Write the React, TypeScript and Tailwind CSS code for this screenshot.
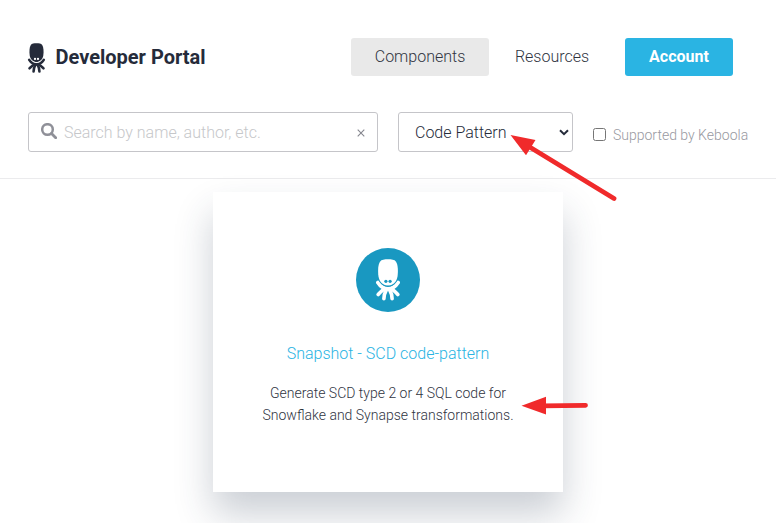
import React from 'react';

function Octopus({ className, ground }: { className: string; ground: string }) {
  return (
    <svg viewBox="0 0 24 42" className={className} fill="none" stroke="currentColor" strokeLinecap="round">
      <g strokeWidth="3.600">
        <path d="M1.800 23.500C4 27 7 29.800 12 29.800S20 27 22.200 23.500" />
        <path d="M9.500 30C6.500 30.500 4.500 33 2.200 35.500M14.500 30c3 .5 5 3 7.300 5.500" />
        <path d="M10.300 31C8.800 33.500 8 36 7.900 39.800M13.700 31c1.500 2.500 2.300 5 2.400 8.800" />
      </g>
      <path
        d="M12 .3C15.500 .3 18.500.5 20 2.700 22 5.800 22.300 12 21.500 17.500 20.600 23.500 16.500 26.600 12 26.600S3.400 23.500 2.500 17.500C1.700 12 2 5.800 4 2.700 5.500.5 8.500.3 12 .3Z"
        fill="currentColor"
        stroke="none"
      />
      <path d="M3.500 22.500C5.500 25.500 8.500 27.400 12 27.400s6.500-1.900 8.500-4.900" stroke={ground} strokeWidth=".7" />
      <circle cx="9.900" cy="22.300" r="1.600" fill={ground} stroke="none" />
      <circle cx="14.100" cy="22.300" r="1.600" fill={ground} stroke="none" />
    </svg>
  );
}

function Header() {
  return (
    <header className="flex h-[38px] items-center">
      <Octopus className="-ml-px mt-[2px] h-[30px] w-[19px] text-[#252b3a]" ground="#fff" />
      <h1 className="ml-[9.500px] text-xl font-bold text-[#252b3a]">Developer Portal</h1>
      <nav className="mr-[43px] ml-auto flex h-[38px] items-center text-base leading-[38px]">
        <a className="w-[138px] rounded-[3px] bg-[#e9e9e9] text-center">Components</a>
        <a className="w-[126px] text-center">Resources</a>
        <a className="ml-[10px] w-[108px] rounded-[3px] bg-[#2ab4e3] text-center font-bold text-white">Account</a>
      </nav>
    </header>
  );
}

function Filters() {
  return (
    <div className="mt-9 flex h-10">
      <div className="flex w-[350px] items-center rounded-[3px] border border-[#c5c5c9] pr-3 pl-3">
        <svg viewBox="0 0 16 16" className="mb-[3px] size-4 text-[#8f9098]" fill="none" stroke="currentColor">
          <circle cx="6.500" cy="6.500" r="5.300" strokeWidth="2.500" />
          <path d="m10.500 10.500 4.200 4.200" strokeWidth="2.800" strokeLinecap="round" />
        </svg>
        <span className="mt-[2px] ml-[7px] text-[#c6c7ca]">Search by name, author, etc.</span>
        <svg viewBox="0 0 8 8" className="mt-px ml-auto size-2 text-[#85868e]" stroke="currentColor" strokeWidth="1.100">
          <path d="m.7.7 6.600 6.600M7.300.7.7 7.300" />
        </svg>
      </div>
      <div className="ml-5 flex w-[175px] items-center rounded-[3px] border border-[#c5c5c9] pr-[3px] pl-4">
        <span className="mt-[2px] text-[#252b3a]">Code Pattern</span>
        <svg viewBox="0 0 10 7" className="ml-auto h-[7px] w-[10px]" fill="none" stroke="#252b3a" strokeWidth="2">
          <path d="m1 1.200 4 4 4-4" />
        </svg>
      </div>
      <label className="ml-5 flex items-center pt-[5px] text-sm text-[#9899a1]">
        <span className="mr-[7px] size-[13px] rounded-[2.500px] border border-[#767676] bg-white" />
        Supported by Keboola
      </label>
    </div>
  );
}

function ComponentCard() {
  return (
    <article className="mx-auto mt-[13px] flex h-[300px] w-[350px] flex-col items-center bg-white pt-14 text-center shadow-[0_22px_36px_rgba(37,56,80,0.24)]">
      <div className="flex size-16 justify-center rounded-full bg-[#1998c1] pt-[11px]">
        <Octopus className="h-[42px] w-6 text-white" ground="#1998c1" />
      </div>
      <h2 className="mt-[30px] text-base leading-6 text-[#2ab4e3]">Snapshot - SCD code-pattern</h2>
      <p className="mt-4 w-[270px] text-sm leading-[22px] text-[#30343f]">
        Generate SCD type 2 or 4 SQL code for Snowflake and Synapse transformations.
      </p>
    </article>
  );
}

export default function App() {
  return (
    <div className="relative h-[523px] w-[776px] overflow-hidden bg-white font-[Roboto,sans-serif] text-base font-light whitespace-normal text-[#30343f]">
      <div className="h-[179px] border-b border-[#ebebed] pt-[38px] pl-7">
        <Header />
        <Filters />
      </div>
      <ComponentCard />
      <svg viewBox="0 0 776 523" className="pointer-events-none absolute inset-0 h-[523px] w-[776px]" stroke="#f02a2b" fill="#f02a2b">
        <path d="M528 146 614 198.500M542 405.800 585.500 405.300" strokeWidth="4.800" strokeLinecap="round" />
        <path d="m510.500 135 25 5-9.500 15.300ZM521.500 405.800l24.500-9v17.700Z" stroke="none" />
      </svg>
    </div>
  );
}
